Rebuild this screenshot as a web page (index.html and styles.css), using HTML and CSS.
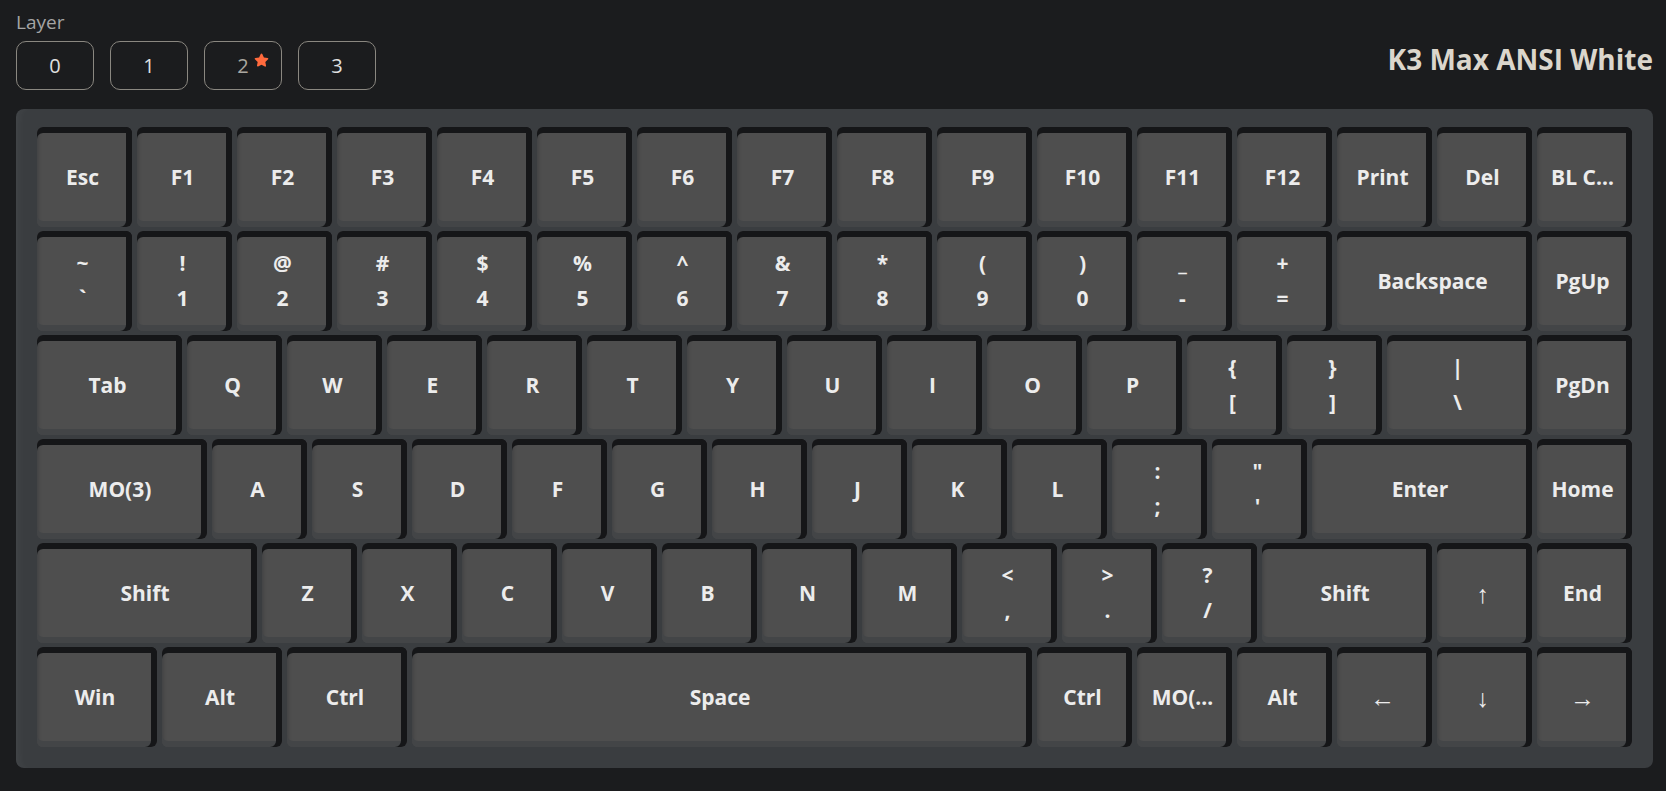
FILE: index.html
```html
<!DOCTYPE html>
<html lang="en">
<head>
  <meta charset="UTF-8" />
  <title>Keymap</title>
  <link rel="stylesheet" href="styles.css">
</head>
<body>
  <!-- Layer picker + board name -->
  <div class="topbar">
    <div class="layers">
      <div class="layer-label">Layer</div>
      <div class="layer-btns">
        <button class="layer-btn">0</button>
        <button class="layer-btn">1</button>
        <button class="layer-btn dim">2<svg class="star" viewBox="0 0 24 24"><path d="M12 2.2c.5 0 .9.3 1.1.7l2.3 4.9 5.3.7c.9.1 1.3 1.3.6 1.9l-3.9 3.7 1 5.3c.2.9-.8 1.6-1.6 1.2L12 18l-4.8 2.6c-.8.4-1.8-.3-1.6-1.2l1-5.3-3.9-3.7c-.7-.6-.3-1.8.6-1.9l5.3-.7 2.3-4.9c.2-.4.6-.7 1.1-.7z"/></svg></button>
        <button class="layer-btn">3</button>
      </div>
    </div>
    <h1 class="title">K3 Max ANSI White</h1>
  </div>

  <!-- Keyboard -->
  <div class="board">
    <div class="row">
      <div class="key">Esc</div>
      <div class="key">F1</div>
      <div class="key">F2</div>
      <div class="key">F3</div>
      <div class="key">F4</div>
      <div class="key">F5</div>
      <div class="key">F6</div>
      <div class="key">F7</div>
      <div class="key">F8</div>
      <div class="key">F9</div>
      <div class="key">F10</div>
      <div class="key">F11</div>
      <div class="key">F12</div>
      <div class="key">Print</div>
      <div class="key">Del</div>
      <div class="key">BL C…</div>
    </div>
    <div class="row">
      <div class="key two"><span>~</span><span>`</span></div>
      <div class="key two"><span>!</span><span>1</span></div>
      <div class="key two"><span>@</span><span>2</span></div>
      <div class="key two"><span>#</span><span>3</span></div>
      <div class="key two"><span>$</span><span>4</span></div>
      <div class="key two"><span>%</span><span>5</span></div>
      <div class="key two"><span>^</span><span>6</span></div>
      <div class="key two"><span>&amp;</span><span>7</span></div>
      <div class="key two"><span>*</span><span>8</span></div>
      <div class="key two"><span>(</span><span>9</span></div>
      <div class="key two"><span>)</span><span>0</span></div>
      <div class="key two"><span>_</span><span>-</span></div>
      <div class="key two"><span>+</span><span>=</span></div>
      <div class="key u2">Backspace</div>
      <div class="key">PgUp</div>
    </div>
    <div class="row">
      <div class="key u15">Tab</div>
      <div class="key">Q</div>
      <div class="key">W</div>
      <div class="key">E</div>
      <div class="key">R</div>
      <div class="key">T</div>
      <div class="key">Y</div>
      <div class="key">U</div>
      <div class="key">I</div>
      <div class="key">O</div>
      <div class="key">P</div>
      <div class="key two"><span>{</span><span>[</span></div>
      <div class="key two"><span>}</span><span>]</span></div>
      <div class="key two u15"><span>|</span><span>\</span></div>
      <div class="key">PgDn</div>
    </div>
    <div class="row">
      <div class="key u175">MO(3)</div>
      <div class="key">A</div>
      <div class="key">S</div>
      <div class="key">D</div>
      <div class="key">F</div>
      <div class="key">G</div>
      <div class="key">H</div>
      <div class="key">J</div>
      <div class="key">K</div>
      <div class="key">L</div>
      <div class="key two"><span>:</span><span>;</span></div>
      <div class="key two"><span>"</span><span>'</span></div>
      <div class="key u225">Enter</div>
      <div class="key">Home</div>
    </div>
    <div class="row">
      <div class="key u225">Shift</div>
      <div class="key">Z</div>
      <div class="key">X</div>
      <div class="key">C</div>
      <div class="key">V</div>
      <div class="key">B</div>
      <div class="key">N</div>
      <div class="key">M</div>
      <div class="key two"><span>&lt;</span><span>,</span></div>
      <div class="key two"><span>&gt;</span><span>.</span></div>
      <div class="key two"><span>?</span><span>/</span></div>
      <div class="key u175">Shift</div>
      <div class="key arrow">↑</div>
      <div class="key">End</div>
    </div>
    <div class="row">
      <div class="key u125">Win</div>
      <div class="key u125">Alt</div>
      <div class="key u125">Ctrl</div>
      <div class="key u625">Space</div>
      <div class="key">Ctrl</div>
      <div class="key">MO(…</div>
      <div class="key">Alt</div>
      <div class="key arrow">←</div>
      <div class="key arrow">↓</div>
      <div class="key arrow">→</div>
    </div>
  </div>
</body>
</html>
```

FILE: styles.css
```css
:root {
  --page-bg: #1b1c1e;
  --board-bg: #3a3d40;
  --key-face: #4e4e4e;
  --key-rim: #151618;
  --key-lip: #434547;
  --legend: #ececec;
}

body {
  margin: 0;
  padding: 9px 13px 0 16px;
  background: var(--page-bg);
  font-family: "Open Sans", "Noto Sans", sans-serif;
}

/* Header: layer buttons and board name */
.topbar {
  width: 1637px;
  display: flex;
  justify-content: space-between;
  align-items: flex-end;
}
.layer-label {
  color: #a4a4a4;
  font-size: 19px;
  line-height: 26px;
  margin-left: 0;
}
.layer-btns {
  display: flex;
  gap: 16px;
  margin-top: 6px;
}
.layer-btn {
  position: relative;
  width: 78px;
  height: 49px;
  box-sizing: border-box;
  border: 1.5px solid #8a8780;
  border-radius: 10px;
  background: transparent;
  color: #e0e0e0;
  font-family: "Open Sans", sans-serif;
  font-size: 20px;
  padding: 0;
}
.layer-btn.dim { color: #aaa7a0; }
.star {
  position: absolute;
  left: 48px;
  top: 10px;
  width: 17px;
  height: 17px;
  fill: #ff6a3d;
}
.title {
  margin: 0 0 12px;
  color: #dbd6cc;
  font-size: 28px;
  font-weight: 700;
  line-height: 38px;
}

/* Keyboard */
.board {
  width: fit-content;
  margin-top: 19px;
  padding: 18px 21px 21px;
  background: var(--board-bg);
  border-radius: 8px;
  box-shadow: inset 8px 0 10px -6px rgba(255, 255, 255, 0.05);
  display: flex;
  flex-direction: column;
  gap: 4px;
}
.row {
  display: flex;
  gap: 5px;
}
.key {
  box-sizing: border-box;
  width: 95px;
  height: 100px;
  padding: 6px 6px 6px 2px;
  background: var(--key-face);
  border-radius: 6px;
  box-shadow:
    inset -6px 0 0 var(--key-rim),
    inset 0 6px 0 var(--key-rim),
    inset 0 -6px 0 var(--key-lip),
    inset 3px 0 3px -1px #444546;
  display: flex;
  flex-direction: column;
  align-items: center;
  justify-content: center;
  color: var(--legend);
  font-size: 21px;
  font-weight: 700;
  white-space: nowrap;
}
.key.two span { line-height: 35px; }
.key.arrow { font-weight: 400; font-size: 25px; }

.u125 { width: 120px; }
.u15 { width: 145px; }
.u175 { width: 170px; }
.u2 { width: 195px; }
.u225 { width: 220px; }
.u625 { width: 620px; }
```
